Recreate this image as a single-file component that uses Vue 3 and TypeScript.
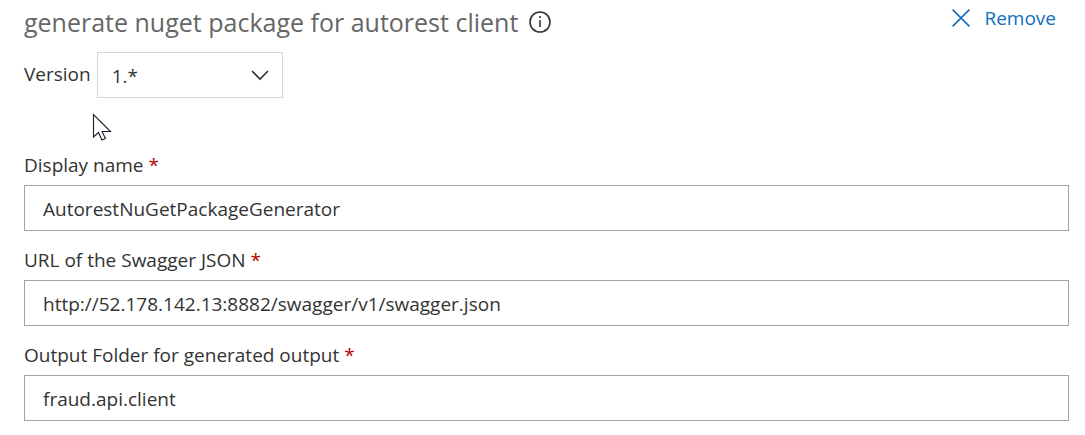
<script setup lang="ts">
import { ref } from 'vue'

interface Field {
  id: string
  label: string
  value: string
}

const version = ref('1.*')
const versions = ['1.*']

const fields = ref<Field[]>([
  { id: 'display-name', label: 'Display name', value: 'AutorestNuGetPackageGenerator' },
  { id: 'swagger-url', label: 'URL of the Swagger JSON', value: 'http://52.178.142.13:8882/swagger/v1/swagger.json' },
  { id: 'output-folder', label: 'Output Folder for generated output', value: 'fraud.api.client' },
])
</script>

<template>
  <main class="task">
    <header class="head">
      <h1 class="title">generate nuget package for autorest client</h1>
      <button class="info" type="button" aria-label="Task information">
        <svg width="22" height="22" viewBox="0 0 22 22" fill="none">
          <circle cx="11" cy="11" r="10" stroke="#333" stroke-width="1.6" />
          <path d="M11 9v7" stroke="#333" stroke-width="1.6" />
          <circle cx="11" cy="6" r="1.1" fill="#333" />
        </svg>
      </button>
      <button class="remove" type="button">
        <svg width="18" height="18" viewBox="0 0 18 18" fill="none" aria-hidden="true">
          <path d="M0.6 0.6l16.8 16.8M17.4 0.6L0.6 17.4" stroke="#106ebe" stroke-width="1.6" />
        </svg>
        <span>Remove</span>
      </button>
    </header>

    <div class="version">
      <label class="version-label" for="version">Version</label>
      <div class="picker">
        <select id="version" v-model="version" class="select">
          <option v-for="v in versions" :key="v" :value="v">{{ v }}</option>
        </select>
        <svg class="chevron" width="18" height="11" viewBox="0 0 18 11" fill="none" aria-hidden="true">
          <path d="M1 1l8 8 8-8" stroke="#333" stroke-width="1.6" />
        </svg>
      </div>
    </div>

    <form class="fields" @submit.prevent>
      <div v-for="field in fields" :key="field.id" class="field">
        <label class="label" :for="field.id">{{ field.label }} <span class="star">*</span></label>
        <input :id="field.id" v-model="field.value" class="input" type="text" required spellcheck="false" />
      </div>
    </form>

    <svg class="pointer" width="20" height="29" viewBox="0 0 20 29" aria-hidden="true">
      <path d="M1.5 1.5v22.5l5-4.5 3.5 7.5 3.5-1.5-3.5-7h8.5z" fill="#fff" stroke="#1b1b2b" stroke-width="1.1" />
    </svg>
  </main>
</template>

<style>
body {
  margin: 0;
  background: #fff;
}
</style>

<style scoped>
.task {
  position: relative;
  box-sizing: border-box;
  padding: 4px 16px 14px 24px;
  font-family: "Segoe UI", "Open Sans", "Noto Sans", sans-serif;
  font-size: 19px;
  line-height: 28px;
  color: #333;
}

.head {
  display: flex;
  align-items: center;
  height: 36px;
}

.title {
  margin: 0;
  font-size: 25px;
  font-weight: 400;
  line-height: 36px;
  color: #666;
  white-space: nowrap;
}

.info,
.remove {
  display: flex;
  align-items: center;
  padding: 0;
  border: 0;
  background: none;
  font: inherit;
  cursor: pointer;
}

.info {
  margin-left: 11px;
}

.remove {
  gap: 14px;
  margin: 0 13px 8px auto;
  color: #106ebe;
}

.version {
  display: flex;
  align-items: center;
  gap: 6px;
  margin-top: 12px;
}

.version-label {
  padding-bottom: 2px;
}

.picker {
  position: relative;
  width: 186px;
}

.select {
  display: block;
  appearance: none;
  box-sizing: border-box;
  width: 100%;
  height: 46px;
  padding: 2px 40px 0 14px;
  border: 1px solid #d6d6d6;
  border-radius: 0;
  background: #fff;
  color: inherit;
  font: inherit;
}

.chevron {
  position: absolute;
  top: 18px;
  right: 14px;
  pointer-events: none;
}

.fields {
  display: grid;
  gap: 15px;
  margin-top: 53px;
}

.field {
  display: grid;
  gap: 6px;
}

.star {
  color: #b80000;
}

.input {
  box-sizing: border-box;
  width: 100%;
  height: 46px;
  padding: 2px 18px 0;
  border: 1px solid #a3a3a3;
  border-radius: 0;
  background: #fff;
  color: inherit;
  font: inherit;
}

.pointer {
  position: absolute;
  top: 113px;
  left: 92px;
  pointer-events: none;
}
</style>
